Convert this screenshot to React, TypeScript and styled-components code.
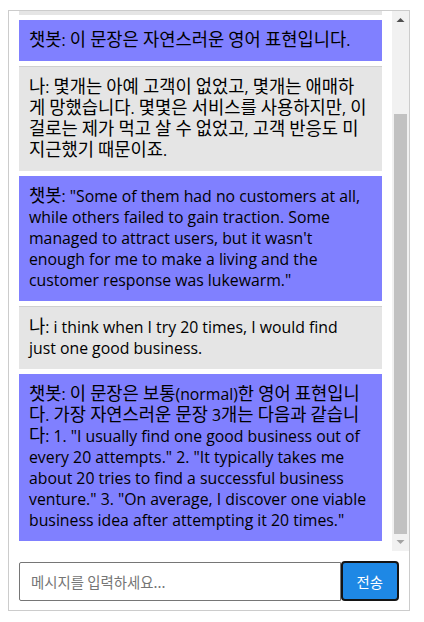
import React, { useCallback, useLayoutEffect, useRef, useState } from "react";
import styled, { createGlobalStyle } from "styled-components";

const GlobalStyle = createGlobalStyle`
  body {
    margin: 0;
    font-family: "Open Sans", "Noto Sans CJK KR", sans-serif;
    color: #000;
    background: #fff;
  }
`;

const ChatContainer = styled.div`
  width: 400px;
  margin: 10px 8px;
  border: 1px solid #cccccc;
  display: flex;
  flex-direction: column;
`;

const ChatArea = styled.div`
  display: flex;
  height: 540px;
`;

const ChatBox = styled.div`
  flex: 1;
  overflow-y: scroll;
  padding: 5px 10px;
  scrollbar-width: none;

  &::-webkit-scrollbar {
    display: none;
  }
`;

const ScrollBar = styled.div`
  width: 17px;
  display: flex;
  flex-direction: column;
  background: #f1f1f1;
`;

const ScrollArrow = styled.div`
  height: 17px;
  flex: none;
  display: flex;
  align-items: center;
  justify-content: center;
`;

const ScrollTrack = styled.div`
  flex: 1;
  display: flex;
  flex-direction: column;
`;

const ScrollThumb = styled.div`
  margin: 0 2px;
  background: #c1c1c1;
  flex: none;
`;

const Message = styled.div<{ $bot: boolean }>`
  margin: 5px 0;
  padding: 10px 14.5px 10px 10px;
  font-size: 15.8px;
  line-height: 21px;
  background: ${(p) => (p.$bot ? "#8080ff" : "#e5e5e5")};
  border-top: ${(p) => (p.$bot ? "none" : "1px solid #cfcfcf")};
`;

const Hangul = styled.span`
  font-family: "Noto Sans CJK KR", sans-serif;
  font-size: 17.66px;
  line-height: 17px;
`;

const InputRow = styled.div`
  display: flex;
  align-items: center;
  padding: 10px 10px 9px;
`;

const MessageInput = styled.input`
  flex: 1;
  min-width: 0;
  height: 39px;
  box-sizing: border-box;
  border: 1px solid #767676;
  border-radius: 2px 0 0 2px;
  padding: 0 11px;
  font-family: "Noto Sans CJK KR", sans-serif;
  font-size: 14.4px;
  outline: none;

  &::placeholder {
    color: #757575;
  }
`;

const SendButton = styled.button`
  height: 40px;
  padding: 0 14px;
  border: 2px solid #141414;
  border-radius: 4px;
  background: #1e88e5;
  color: #fff;
  font-family: "Noto Sans CJK KR", sans-serif;
  font-size: 14.4px;
  cursor: pointer;
`;

const Arrow: React.FC<{ up: boolean; active: boolean }> = ({ up, active }) => (
  <svg width="9" height="5" viewBox="0 0 9 5">
    <polygon
      points={up ? "0.5,5 8.5,5 4.5,1" : "0.5,0 8.5,0 4.5,4"}
      fill={active ? "#505050" : "#a3a3a3"}
    />
  </svg>
);

// split text so Hangul runs can take their own font size
const withHangul = (text: string) =>
  text.split(/([\uAC00-\uD7A3\u3131-\u318E]+)/).map((part, i) =>
    i % 2 === 1 ? <Hangul key={i}>{part}</Hangul> : part,
  );

type ChatMessage = { bot: boolean; text: string };

const initialMessages: ChatMessage[] = [
  {
    bot: false,
    text: "나: Some of them had no customers at all, and some failed in an ambiguous way. Some got users, but I couldn't make a living and the customer response was lukewarm.",
  },
  { bot: true, text: "챗봇: 이 문장은 자연스러운 영어 표현입니다." },
  {
    bot: false,
    text: "나: 몇개는 아예 고객이 없었고, 몇개는 애매하게 망했습니다. 몇몇은 서비스를 사용하지만, 이걸로는 제가 먹고 살 수 없었고, 고객 반응도 미지근했기 때문이죠.",
  },
  {
    bot: true,
    text: "챗봇: \"Some of them had no customers at all, while others failed to gain traction. Some managed to attract users, but it wasn't enough for me to make a living and the customer response was lukewarm.\"",
  },
  {
    bot: false,
    text: "나: i think when I try 20 times, I would find just one good business.",
  },
  {
    bot: true,
    text: "챗봇: 이 문장은 보통(normal)한 영어 표현입니다. 가장 자연스러운 문장 3개는 다음과 같습니다: 1. \"I usually find one good business out of every 20 attempts.\" 2. \"It typically takes me about 20 tries to find a successful business venture.\" 3. \"On average, I discover one viable business idea after attempting it 20 times.\"",
  },
];

type Thumb = { top: number; height: number; atTop: boolean; atBottom: boolean };

const App: React.FC = () => {
  const [messages, setMessages] = useState(initialMessages);
  const [draft, setDraft] = useState("");
  const [thumb, setThumb] = useState<Thumb>({ top: 0, height: 0, atTop: true, atBottom: true });
  const boxRef = useRef<HTMLDivElement>(null);
  const trackRef = useRef<HTMLDivElement>(null);

  const measure = useCallback(() => {
    const box = boxRef.current;
    const track = trackRef.current;
    if (!box || !track) return;
    const trackLen = track.clientHeight;
    const { scrollTop, scrollHeight, clientHeight } = box;
    const height = Math.max(20, (trackLen * clientHeight) / scrollHeight);
    const range = scrollHeight - clientHeight;
    const top = range > 0 ? ((trackLen - height) * scrollTop) / range : 0;
    setThumb({
      top,
      height,
      atTop: scrollTop <= 0,
      atBottom: scrollTop >= range - 1,
    });
  }, []);

  useLayoutEffect(() => {
    if (boxRef.current) {
      boxRef.current.scrollTop = boxRef.current.scrollHeight;
    }
    measure();
  }, [messages, measure]);

  const send = () => {
    if (!draft.trim()) return;
    setMessages([...messages, { bot: false, text: `나: ${draft}` }]);
    setDraft("");
  };

  return (
    <>
      <GlobalStyle />
      <ChatContainer>
        <ChatArea>
          <ChatBox ref={boxRef} onScroll={measure}>
            {messages.map((m, i) => (
              <Message key={i} $bot={m.bot}>
                {withHangul(m.text)}
              </Message>
            ))}
          </ChatBox>
          <ScrollBar>
            <ScrollArrow>
              <Arrow up active={!thumb.atTop} />
            </ScrollArrow>
            <ScrollTrack ref={trackRef}>
              <ScrollThumb style={{ marginTop: thumb.top, height: thumb.height }} />
            </ScrollTrack>
            <ScrollArrow>
              <Arrow up={false} active={!thumb.atBottom} />
            </ScrollArrow>
          </ScrollBar>
        </ChatArea>
        <InputRow>
          <MessageInput
            placeholder="메시지를 입력하세요..."
            value={draft}
            onChange={(e) => setDraft(e.target.value)}
            onKeyDown={(e) => e.key === "Enter" && send()}
          />
          <SendButton onClick={send}>전송</SendButton>
        </InputRow>
      </ChatContainer>
    </>
  );
};

export default App;
